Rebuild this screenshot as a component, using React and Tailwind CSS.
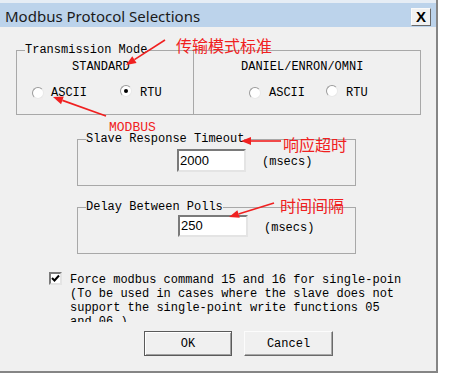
import React from 'react';

const mono = { fontFamily: '"Liberation Mono", monospace' };

function Arrow({ x1, y1, x2, y2 }) {
  const dx = x2 - x1;
  const dy = y2 - y1;
  const len = Math.hypot(dx, dy);
  const ux = dx / len;
  const uy = dy / len;
  const bx = x2 - ux * 10;
  const by = y2 - uy * 10;
  const px = -uy * 4;
  const py = ux * 4;
  return (
    <g>
      <line x1={x1} y1={y1} x2={bx} y2={by} stroke="#f02020" strokeWidth="1.6" />
      <polygon points={`${x2},${y2} ${bx + px},${by + py} ${bx - px},${by - py}`} fill="#f02020" />
    </g>
  );
}

function Radio({ checked }) {
  return (
    <span className="relative inline-block w-3 h-3 rounded-full bg-white border border-[#9a9a9a] border-r-[#e8e8e8] border-b-[#e8e8e8] shrink-0">
      {checked && <span className="absolute left-[3px] top-[3px] w-1 h-1 rounded-full bg-black" />}
    </span>
  );
}

function Group({ label, children, className }) {
  return (
    <div className={`relative border border-[#a8a8a8] ${className}`}>
      <span className="absolute left-[8px] top-[-8px] bg-[#f0f0f0] text-[12px] leading-[14px] text-black" style={mono}>
        {label}
      </span>
      {children}
    </div>
  );
}

function Field({ value, ml, mt, w, h, gap }) {
  return (
    <div className="flex items-center" style={{ marginLeft: ml, marginTop: mt }}>
      <div
        className="bg-white border-2 border-[#7a7a7a] border-r-[#e4e4e4] border-b-[#e4e4e4] flex items-center pl-[1px] text-[13px] text-black"
        style={{ width: w, height: h, fontFamily: '"Liberation Sans", Arial, sans-serif' }}
      >
        {value}
      </div>
      <span className="text-[12px] leading-[14px] text-black mt-[3px]" style={{ ...mono, marginLeft: gap }}>
        (msecs)
      </span>
    </div>
  );
}

export default function App() {
  return (
    <div className="relative w-[453px] h-[373px] bg-white overflow-hidden">
      <div className="w-[438px] h-[373px] flex flex-col bg-[#f0f0f0] border-r-2 border-b-2 border-[#858585]">
        <div className="h-[27px] flex items-center justify-between pl-[5px] pr-[5px] pt-[3px] bg-[#bcd3eb] border-t-[3px] border-[#e6edf5]">
          <span className="text-[15px] text-[#1a1a1a]" style={{ fontFamily: '"Noto Sans", sans-serif' }}>
            Modbus Protocol Selections
          </span>
          <div className="w-[20px] h-[18px] flex items-center justify-center bg-[#f2f2f2] border border-[#fafafa] border-r-[#6a6a6a] border-b-[#6a6a6a] text-[15px] font-bold leading-none text-black" style={{ fontFamily: '"Liberation Sans", sans-serif' }}>
            X
          </div>
        </div>

        <div className="flex flex-col">
          <Group label="Transmission Mode" className="ml-[16px] mt-[23px] w-[405px] h-[65px] flex">
            <div className="w-[177px] border-r border-[#a8a8a8] pt-[9px] text-[12px] leading-[14px] text-black" style={mono}>
              <div className="pl-[55px]">STANDARD</div>
              <div className="flex items-center pl-[15px] mt-[11px]">
                <Radio />
                <span className="ml-[7px]">ASCII</span>
                <span className="ml-[33px]"><Radio checked /></span>
                <span className="ml-[8px]">RTU</span>
              </div>
            </div>
            <div className="flex-1 pt-[9px] text-[12px] leading-[14px] text-black" style={mono}>
              <div className="pl-[47px]">DANIEL/ENRON/OMNI</div>
              <div className="flex items-center pl-[55px] mt-[11px]">
                <Radio />
                <span className="ml-[8px]">ASCII</span>
                <span className="ml-[21px]"><Radio /></span>
                <span className="ml-[8px]">RTU</span>
              </div>
            </div>
          </Group>

          <Group label="Slave Response Timeout" className="ml-[77px] mt-[24px] w-[279px] h-[47px]">
            <Field value="2000" ml={99} mt={9} w={69} h={23} gap={16} />
          </Group>

          <Group label="Delay Between Polls" className="ml-[77px] mt-[21px] w-[279px] h-[47px]">
            <Field value="250" ml={100} mt={7} w={70} h={22} gap={16} />
          </Group>

          <div className="flex items-start ml-[49px] mt-[19px]">
            <div className="w-[13px] h-[13px] bg-white border-2 border-[#7a7a7a] border-r-[#e4e4e4] border-b-[#e4e4e4] flex items-center justify-center shrink-0 mt-[-1px]">
              <svg width="9" height="9" viewBox="0 0 9 9">
                <path d="M1 4 L3.5 6.5 L8 1.5" fill="none" stroke="#000" strokeWidth="2" />
              </svg>
            </div>
            <div className="ml-[8px] w-[332px] h-[49px] overflow-hidden whitespace-pre text-[12px] leading-[14px] text-black" style={mono}>
              {'Force modbus command 15 and 16 for single-point\n(To be used in cases where the slave does not\nsupport the single-point write functions 05\nand 06.)'}
            </div>
          </div>

          <div className="flex ml-[144px] mt-[9px] gap-[12px] text-[12px] text-black" style={mono}>
            <div className="w-[88px] h-[25px] flex items-center justify-center border border-[#5a5a5a] shadow-[inset_1px_1px_0_#ffffff,inset_-1px_-1px_0_#a0a0a0] bg-[#f0f0f0]">
              OK
            </div>
            <div className="w-[89px] h-[25px] flex items-center justify-center border border-[#fcfcfc] border-r-[#6a6a6a] border-b-[#6a6a6a] shadow-[inset_-1px_-1px_0_#a8a8a8] bg-[#f0f0f0]">
              Cancel
            </div>
          </div>
        </div>
      </div>

      <div className="absolute left-[176px] top-[37px] text-[16px] leading-none text-[#f02020]" style={{ fontFamily: '"Noto Sans CJK SC", sans-serif' }}>
        传输模式标准
      </div>
      <div className="absolute left-[109px] top-[121px] text-[13px] leading-none text-[#f02020]" style={mono}>
        MODBUS
      </div>
      <div className="absolute left-[283px] top-[136px] text-[16px] leading-none text-[#f02020]" style={{ fontFamily: '"Noto Sans CJK SC", sans-serif' }}>
        响应超时
      </div>
      <div className="absolute left-[280px] top-[197px] text-[16px] leading-none text-[#f02020]" style={{ fontFamily: '"Noto Sans CJK SC", sans-serif' }}>
        时间间隔
      </div>

      <svg className="absolute inset-0 pointer-events-none" width="453" height="373">
        <Arrow x1={165} y1={40} x2={126} y2={65} />
        <Arrow x1={106} y1={116} x2={53} y2={97} />
        <Arrow x1={281} y1={141} x2={241} y2={141} />
        <Arrow x1={274} y1={203} x2={229} y2={217} />
      </svg>
    </div>
  );
}
